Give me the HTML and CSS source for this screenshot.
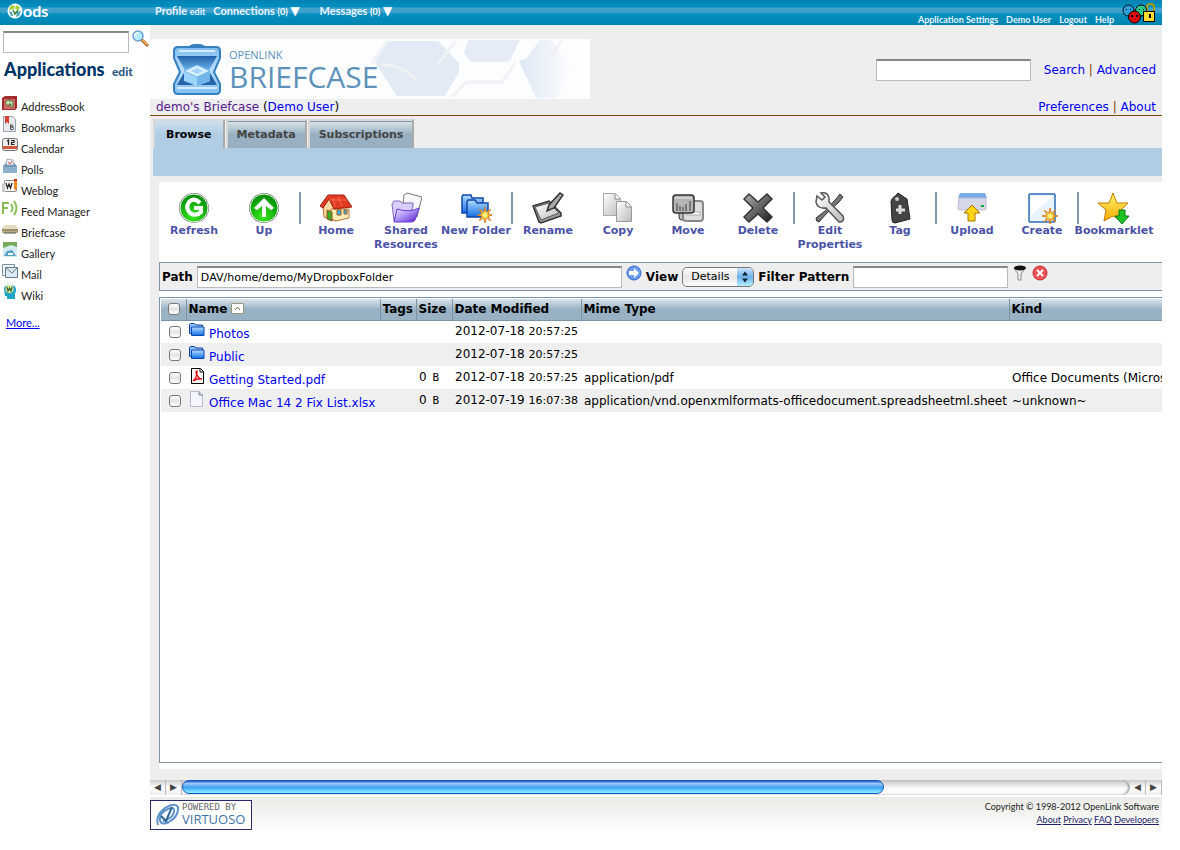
FILE: index.html
```html
<!DOCTYPE html>
<html lang="en">
<head>
    <meta charset="UTF-8" />
    <meta name="viewport" content="width=device-width, initial-scale=1.0" />
    <title>ODS Briefcase</title>
    <link rel="stylesheet" href="styles.css">
</head>
<body>

<!-- shared gradients and symbols -->
<svg class="defs" width="0" height="0" aria-hidden="true">
    <defs>
        <radialGradient id="green" cx="45%" cy="80%" r="75%"><stop offset="0" stop-color="#35e81c"/><stop offset="1" stop-color="#078c0b"/></radialGradient>
        <linearGradient id="blue" x1="0" y1="0" x2="0" y2="1"><stop offset="0" stop-color="#b4dcff"/><stop offset="1" stop-color="#0f6fe6"/></linearGradient>
        <linearGradient id="violet" x1="0" y1="0" x2="1" y2="1"><stop offset="0" stop-color="#f2ecff"/><stop offset=".5" stop-color="#a98cf5"/><stop offset="1" stop-color="#5215c8"/></linearGradient>
        <linearGradient id="gray" x1="0" y1="0" x2="1" y2="1"><stop offset="0" stop-color="#fff"/><stop offset="1" stop-color="#bbb"/></linearGradient>
        <linearGradient id="dark" x1="0" y1="0" x2="1" y2="1"><stop offset="0" stop-color="#b0b0b0"/><stop offset="1" stop-color="#1c1c1c"/></linearGradient>
        <linearGradient id="gold" x1="0" y1="0" x2="0" y2="1"><stop offset="0" stop-color="#fff36b"/><stop offset="1" stop-color="#f8a900"/></linearGradient>
        <linearGradient id="case" x1="0" y1="0" x2="0" y2="1"><stop offset="0" stop-color="#7fbcf0"/><stop offset=".5" stop-color="#b9dffb"/><stop offset="1" stop-color="#82bdf0"/></linearGradient>
        <linearGradient id="inner" x1="0" y1="0" x2="0" y2="1"><stop offset="0" stop-color="#1f62ac"/><stop offset="1" stop-color="#6db1ea"/></linearGradient>
        <linearGradient id="fade"><stop offset="0" stop-color="#dde7f4"/><stop offset="1" stop-color="#fcfdfe"/></linearGradient>
    </defs>
    <symbol id="spark" viewBox="0 0 14 14">
        <path d="M7 0l1 4.500L12 2 9.500 6 14 7 9.500 8 12 12 8 9.500 7 14 6 9.500 2 12 4.500 8 0 7l4.500-1L2 2l4 2.500z" fill="#ffdc4c" stroke="#d2761a" stroke-width=".8"/>
        <circle cx="7" cy="7" r="2" fill="#fff27a"/>
    </symbol>
    <symbol id="folder" viewBox="0 0 16 16">
        <path d="M.5 11.500v-9l1-1h4l1.500 1.500h6.500v9z" fill="#8cc4f8" stroke="#0c3f9c"/>
        <path d="M2.500 13.500V5h12.500v8.500z" fill="url(#blue)" stroke="#0a47b0"/>
    </symbol>
</svg>

<header class="topbar">
    <a class="ods" href="#">
        <svg width="16" height="16" viewBox="0 0 16 16"><circle cx="8" cy="8" r="7.500" fill="#fff"/><path d="M4 2l4 1-1 3-5 1zM9 2l4 2-1 3-4-1z" fill="#a5cf38"/><path d="M2 8l3 1 1 4-2 0zM10 9l4-1-2 5-3 1z" fill="#4ca9b9"/><path d="M6 7l2 4 3-4" fill="none" stroke="#3d7d31" stroke-width="1.500"/></svg>
        <span>ods</span>
    </a>
    <nav class="topnav">
        <span><a href="#">Profile</a> <a class="small" href="#">edit</a></span>
        <span><a href="#">Connections</a> <span class="small">(0)</span> <b>▼</b></span>
        <span><a href="#">Messages</a> <span class="small">(0)</span> <b>▼</b></span>
    </nav>
    <nav class="usernav">
        <a href="#">Application Settings</a>
        <a href="#">Demo User</a>
        <a href="#">Logout</a>
        <a href="#">Help</a>
    </nav>
    <svg class="faces" width="34" height="22" viewBox="0 0 34 22">
        <g stroke="#000">
            <path d="M25 9V4q0-3 3.500-3T32 4v5" fill="none" stroke="#a89a10" stroke-width="2"/>
            <circle cx="6.500" cy="7.500" r="5.500" fill="#2a9fdc"/>
            <circle cx="19" cy="7.500" r="5.500" fill="#2cc88c"/>
            <rect x="21.500" y="8.500" width="11" height="10" fill="#ffd92e"/>
            <circle cx="12.500" cy="14" r="6" fill="#dd0c0c"/>
        </g>
        <path d="M4 6h1v1H4zM8 6h1v1H8zM17 6h1v1h-1zM21 6h1v1h-1zM9 12h2v2H9zM14 12h2v2h-2zM27 11h2v4h-2z"/>
    </svg>
</header>

<div class="columns">
    <aside class="sidebar">
        <form class="find">
            <input type="text" aria-label="Find">
            <button type="button" aria-label="Find">
                <svg width="17" height="17" viewBox="0 0 17 17"><path d="M10 10l5 5" stroke="#8a4b13" stroke-width="3" stroke-linecap="round"/><path d="M10.500 10l4.500 4.500" stroke="#f1a94c" stroke-width="2" stroke-linecap="round"/><circle cx="6" cy="6" r="5" fill="#b9ecfb" stroke="#6c9ed0" stroke-width="1.500"/><path d="M3 6q0-3 3-3" stroke="#fff" stroke-width="1.500" fill="none"/></svg>
            </button>
        </form>
        <h2>Applications <a href="#">edit</a></h2>
        <ul>
            <li><svg width="16" height="16" viewBox="0 0 16 16"><path d="M0 3l3-2h12v12l-2 2H0z" fill="#a32b2b"/><path d="M2 4h11v10H2z" fill="#c96b66"/><path d="M3 8l4-4v2h4v6H9V9H7v2z" fill="#b9e2a4" stroke="#426c35" stroke-width=".7"/></svg><a href="#">AddressBook</a></li>
            <li><svg width="16" height="16" viewBox="0 0 16 16"><path d="M1.500.500h9l3 3v12h-12z" fill="#e6eaee" stroke="#9aa3ad"/><path d="M3 0h4v8L5 6 3 8z" fill="#d5412f"/><path d="M8.500 8.500v5M8.500 9h2q1 1 0 2h-2h2.500q1 1 0 2.500h-2.500" fill="none" stroke="#555"/></svg><a href="#">Bookmarks</a></li>
            <li><svg width="16" height="16" viewBox="0 0 16 16"><rect x=".5" y="1.500" width="15" height="12" rx="2" fill="#eee" stroke="#777"/><path d="M1 9h14v3H1z" fill="#d4573f"/><path d="M5 4l1.500-1v5M9 3.500h3v2H9.500v2h3" fill="none" stroke="#222" stroke-width="1.200"/></svg><a href="#">Calendar</a></li>
            <li><svg width="16" height="16" viewBox="0 0 16 16"><path d="M1 8l3-3h8l3 3v7H1z" fill="#7195b4"/><path d="M1 9h14v6H1z" fill="#8db1cc"/><path d="M4 7l1-6 6 1 1 5z" fill="#f3f6fa" stroke="#8499ae" stroke-width=".8"/><path d="M6 4l2 2 2-3" fill="none" stroke="#ca3939"/></svg><a href="#">Polls</a></li>
            <li><svg width="16" height="16" viewBox="0 0 16 16"><rect x="2.500" y="1.500" width="12" height="11" rx="1" fill="#fff" stroke="#888"/><path d="M0 5l3-1v9H0" fill="#ccc"/><path d="M4 4l1.500 5L7 5l1.500 4L10 4" fill="none" stroke="#222" stroke-width="1.300"/><path d="M12 0h3v9l-2 3-1-3z" fill="#f18921"/><path d="M12 0h3v2h-3z" fill="#c73121"/></svg><a href="#">Weblog</a></li>
            <li><svg width="16" height="16" viewBox="0 0 16 16"><path d="M1 14V3h6M1 8h5M9 4q3 4 0 8M12 1q5 7 0 14" fill="none" stroke="#89bf55" stroke-width="2"/></svg><a href="#">Feed Manager</a></li>
            <li><svg width="16" height="16" viewBox="0 0 16 16"><path d="M0 8l3-4h10l3 4v4H0z" fill="#b9ad85"/><path d="M3 4h10l3 4H0z" fill="#e4dec1"/><path d="M0 9h16" stroke="#7e7352"/><path d="M2 12h12" stroke="#555"/></svg><a href="#">Briefcase</a></li>
            <li><svg width="16" height="16" viewBox="0 0 16 16"><path d="M1 0h14v15H1z" fill="#d7ebf2"/><path d="M1 0h14v5L9 3 1 6z" fill="#75a95b"/><path d="M2 14l3-5 5-1 4 6z" fill="#54a1c6"/><path d="M6 11h5v2H6z" fill="#fff"/></svg><a href="#">Gallery</a></li>
            <li><svg width="16" height="16" viewBox="0 0 16 16"><path d="M.5 1.500h12v11H.5z" fill="#f0f3f5" stroke="#7d92a0"/><path d="M3.500 4.500h12v10h-12z" fill="#dbe8f1" stroke="#5f7e92"/><path d="M4 5l6 5 5-5" fill="none" stroke="#5f7e92"/></svg><a href="#">Mail</a></li>
            <li><svg width="16" height="16" viewBox="0 0 16 16"><path d="M2 5q0-4 6-4 7 0 6 6l-1 3v5H5v-3H3z" fill="#20a5ca"/><circle cx="7.500" cy="5" r="4" fill="#e1e996"/><path d="M5 3l1 4 1.500-3L9 7l1-4" fill="none" stroke="#376236" stroke-width="1.200"/></svg><a href="#">Wiki</a></li>
        </ul>
        <a class="more" href="#">More...</a>
    </aside>

    <main>
        <div class="banner">
            <div class="brand">
                <svg width="50" height="51" viewBox="0 0 50 51">
                    <path d="M17 4q8-6 16 0" fill="none" stroke="#3b80bd" stroke-width="3"/>
                    <path d="M6 3h38q4 0 4 4v7l-6 14 6 12v6q0 4-4 4H6q-4 0-4-4v-6l6-12L2 14V7q0-4 4-4z" fill="url(#case)" stroke="#3480c1" stroke-width="2"/>
                    <path d="M5 12h40l-8 14H13z" fill="url(#inner)"/>
                    <path d="M13 27h24l8 14H5z" fill="#2864a8"/>
                    <path d="M12 27l13-6 13 6v10l-13 5-13-5z" fill="#9dd4fa"/>
                    <path d="M12 27l13-6 13 6-13 6z" fill="#d9f0ff" stroke="#75b7e8"/>
                    <path d="M25 33v9l13-5V27z" fill="#72b5ea"/>
                    <path d="M19 27l6-3 6 3-6 3z" fill="#a4d5f8"/>
                    <path d="M5 44h40M7 7h36" stroke="#d5ecff" stroke-width="2"/>
                </svg>
                <div class="brand-text"><span>OPENLINK</span><strong>BRIEFCASE</strong></div>
                <svg class="hexes" width="220" height="60" viewBox="0 0 220 60">
                    <path d="M5 24Q14 3 20 2h48l21 22v9L75 57H27z" fill="#e2eaf5"/>
                    <path d="M94 14l4-13h52l-10 20q-2 2-5 2h-32q-3 0-5-3z" fill="#e5ecf6"/>
                    <path d="M149 22l7-2 14-19h12l20 30-16 28h-20z" fill="url(#fade)"/>
                    <g fill="none" stroke="#f0f2f5" stroke-width="3">
                        <path d="M2 24L17 2M12 26q20 0 34 14M68 24L86 2M96 43h36l14-20M96 43L82 58M176 22L192 2"/>
                    </g>
                </svg>
            </div>
            <div class="quick">
                <input type="text" aria-label="Search">
                <a href="#">Search</a> <i>|</i> <a href="#">Advanced</a>
            </div>
        </div>
        <div class="crumbs">
            <span><a class="visited" href="#">demo's Briefcase</a> (<a href="#">Demo User</a>)</span>
            <span><a href="#">Preferences</a> <i>|</i> <a href="#">About</a></span>
        </div>

        <div class="tabs">
            <button type="button" class="active">Browse</button>
            <button type="button">Metadata</button>
            <button type="button">Subscriptions</button>
        </div>
        <div class="strip"></div>

        <section class="panel">
            <div class="toolbar">
                <button type="button"><svg width="32" height="32" viewBox="0 0 32 32"><circle cx="16" cy="16" r="15" fill="#777"/><circle cx="16" cy="16" r="14" fill="url(#green)" stroke="#e8ffe8"/><path d="M22 11q-6-6-11-1-4 6 1 11 6 4 11-1v-4h-7" fill="none" stroke="#fff" stroke-width="4"/></svg>Refresh</button>
                <button type="button"><svg width="32" height="32" viewBox="0 0 32 32"><circle cx="16" cy="16" r="15" fill="#777"/><circle cx="16" cy="16" r="14" fill="url(#green)" stroke="#e8ffe8"/><path d="M16 6l10 10-3 2-5-4v11h-4V14l-5 4-3-2z" fill="#fff"/></svg>Up</button>
                <hr>
                <button type="button"><svg width="32" height="32" viewBox="0 0 32 32"><path d="M3 14l7-8 6 11v12L4 25z" fill="#ffd9a0" stroke="#b06b30"/><path d="M11 17h18v9l-13 3-5-2z" fill="#ffedb9" stroke="#b5763a"/><path d="M0 14L8 3h16l8 12-18 2-5-10-6 9z" fill="#e53a22" stroke="#9a1f10"/><path d="M13 6l2 9M18 5l4 9M9 8h18" stroke="#f77a5a" stroke-width=".8"/><path d="M7 18l5 2v9l-5-2z" fill="#3daa26" stroke="#9a5020"/><path d="M17 18h4v5h-4zM24 18h3v4h-3z" fill="#3bb2ee" stroke="#9a5b20"/></svg>Home</button>
                <button type="button"><svg width="32" height="32" viewBox="0 0 32 32"><path d="M14 3l3-2 15 4-5 20-15-4z" fill="#f7f7fb" stroke="#777"/><path d="M2 12l2-3h6l2 2h11v3l-4 15H4z" fill="#d8cdfb" stroke="#7c69bd"/><path d="M7 17q12 4 22-1l-4 12q-1 2-4 2H4z" fill="url(#violet)" stroke="#6b3ad0"/></svg>Shared Resources</button>
                <button type="button"><svg width="32" height="32" viewBox="0 0 32 32"><path d="M2 21V5l1-2h8l1 3h11v15z" fill="url(#blue)" stroke="#1246ab" stroke-width="1.500"/><path d="M7 25V10l1-2h7l2 3h11v14z" fill="url(#blue)" stroke="#1246ab" stroke-width="1.500"/><use href="#spark" x="17" y="15" width="16" height="16"/></svg>New Folder</button>
                <hr>
                <button type="button"><svg width="32" height="32" viewBox="0 0 32 32"><path d="M1 14l16-5 12 12v3L9 31 7 30z" fill="#999" stroke="#333" stroke-width="1.500"/><path d="M3 15l14-4 10 10-18 7z" fill="url(#gray)" stroke="#555"/><path d="M15 19l2-6L28 1l3 2-9 13z" fill="#aaa" stroke="#333" stroke-width="1.500"/></svg>Rename</button>
                <button type="button"><svg width="32" height="32" viewBox="0 0 32 32"><path d="M1.500 1.500h12l5 5v17h-17z" fill="url(#gray)" stroke="#aaa"/><path d="M13 2v5h5" fill="#fff" stroke="#888"/><path d="M14.500 9.500h10l5 5v15h-15z" fill="url(#gray)" stroke="#999"/><path d="M24 10v5h5" fill="#fff" stroke="#888"/></svg>Copy</button>
                <button type="button"><svg width="32" height="32" viewBox="0 0 32 32"><rect x="7" y="10" width="19" height="18" rx="3" fill="#bbb" stroke="#333"/><rect x="11" y="9" width="20" height="20" rx="3" fill="#ddd" stroke="#888" stroke-width="2"/><path d="M14 20h14v3H14z" fill="#fff" stroke="#aaa"/><rect x="1" y="3" width="21" height="18" rx="3" fill="#b5b5b5" stroke="#333" stroke-width="1.500"/><path d="M5 19v-8M8 19v-5M11 19v-4M14 19v-7M18 19V9" stroke="#777" stroke-width="2"/><path d="M3 6h17" stroke="#eee"/></svg>Move</button>
                <button type="button"><svg width="32" height="32" viewBox="0 0 32 32"><path d="M2 7l5-5 9 8 9-8 5 5-9 9 9 9-5 5-9-8-9 8-5-5 9-9z" fill="url(#dark)" stroke="#333" stroke-width="1.500" stroke-linejoin="round"/></svg>Delete</button>
                <hr>
                <button type="button"><svg width="32" height="32" viewBox="0 0 32 32"><path d="M26 2l3 3-4 5-12 11-8 9q-3 0-3-4l9-7L22 7z" fill="#777" stroke="#333"/><path d="M3 4l5 4 3-3-4-4q7-1 8 5v4l14 14q2 6-4 6L12 16q-9 1-10-6z" fill="url(#gray)" stroke="#555" stroke-width="1.500"/></svg>Edit Properties</button>
                <button type="button"><svg width="32" height="32" viewBox="0 0 32 32"><path d="M7 8q4-8 13-1" fill="none" stroke="#666"/><path d="M7 9l7-8 9 6 3 20-15 4q-3 0-3-3z" fill="#444" stroke="#222"/><circle cx="13" cy="7" r="2" fill="#ccc"/><path d="M16 13v9M12 18h9" stroke="#ddd" stroke-width="3"/></svg>Tag</button>
                <hr>
                <button type="button"><svg width="32" height="32" viewBox="0 0 32 32"><path d="M4 1h25l2 5H2z" fill="#78a9e8"/><path d="M3 6h27v10q0 2-2 2H4q-2 0-2-2z" fill="#d6d8e8" stroke="#b7bbd2"/><path d="M25 14h3" stroke="#0a3" stroke-width="2"/><path d="M16 13l8 8h-5v8h-7v-8H8z" fill="#ffd417" stroke="#a67600"/></svg>Upload</button>
                <button type="button"><svg width="32" height="32" viewBox="0 0 32 32"><rect x="3" y="2" width="26" height="28" rx="1" fill="#eaf4ff" stroke="#2c6cb8" stroke-width="1.500"/><path d="M5 4h22L5 23z" fill="#fff"/><use href="#spark" x="16" y="16" width="16" height="16"/></svg>Create</button>
                <hr>
                <button type="button"><svg width="32" height="32" viewBox="0 0 32 32"><path d="M15 1l4 10h11l-8 8 3 11-10-6-9 5 2-11-8-7h11z" fill="url(#gold)" stroke="#c77a00"/><path d="M21 18h6v6h4l-7 8-7-8h4z" fill="#1fc325" stroke="#087610"/></svg>Bookmarklet</button>
            </div>

            <form class="pathbar">
                <label for="path">Path</label>
                <input id="path" class="path" type="text" value="DAV/home/demo/MyDropboxFolder">
                <button type="button" aria-label="Go"><svg width="16" height="16" viewBox="0 0 16 16"><circle cx="8" cy="8" r="7" fill="#6b9df0" stroke="#3563cb"/><path d="M3 6h5V3l5 5-5 5v-3H3z" fill="#fff"/></svg></button>
                <label for="view">View</label>
                <span class="select">
                    <select id="view"><option>Details</option><option>List</option></select>
                    <svg width="16" height="18" viewBox="0 0 16 18"><path d="M8 3.500l3 4H5zM8 14.500l3-4H5z" fill="#123"/></svg>
                </span>
                <label for="filter">Filter Pattern</label>
                <input id="filter" class="filter" type="text">
                <button type="button" aria-label="Filter"><svg width="16" height="16" viewBox="0 0 16 16"><path d="M2 3l4 6v6h3V9l4-6z" fill="#eee" stroke="#888"/><ellipse cx="8" cy="3" rx="6" ry="2.500" fill="#111"/></svg></button>
                <button type="button" aria-label="Clear"><svg width="16" height="16" viewBox="0 0 16 16"><circle cx="8" cy="8" r="7" fill="#ee5257" stroke="#c72a32"/><path d="M5 5l6 6M11 5l-6 6" stroke="#fff" stroke-width="2"/></svg></button>
            </form>

            <div class="listing">
                <table>
                    <colgroup>
                        <col class="c-check"><col class="c-name"><col class="c-tags"><col class="c-size"><col class="c-date"><col class="c-mime"><col class="c-kind">
                    </colgroup>
                    <thead>
                        <tr>
                            <th><input type="checkbox" aria-label="Select all"></th>
                            <th>Name <svg width="13" height="11" viewBox="0 0 13 11"><path d="M.5.500h12v10H.5z" fill="#fff" stroke="#99957a"/><path d="M4 7l2.500-3L9 7" fill="none" stroke="#77704a"/></svg></th>
                            <th>Tags</th>
                            <th>Size</th>
                            <th>Date Modified</th>
                            <th>Mime Type</th>
                            <th>Kind</th>
                        </tr>
                    </thead>
                    <tbody>
                        <tr>
                            <td><input type="checkbox" aria-label="Photos"></td>
                            <td><span class="file"><svg width="16" height="16"><use href="#folder"/></svg><a href="#">Photos</a></span></td>
                            <td></td>
                            <td></td>
                            <td>2012-07-18 <small>20:57:25</small></td>
                            <td></td>
                            <td></td>
                        </tr>
                        <tr>
                            <td><input type="checkbox" aria-label="Public"></td>
                            <td><span class="file"><svg width="16" height="16"><use href="#folder"/></svg><a href="#">Public</a></span></td>
                            <td></td>
                            <td></td>
                            <td>2012-07-18 <small>20:57:25</small></td>
                            <td></td>
                            <td></td>
                        </tr>
                        <tr>
                            <td><input type="checkbox" aria-label="Getting Started.pdf"></td>
                            <td><span class="file"><svg width="16" height="16" viewBox="0 0 16 16"><path d="M2.500.500h9l3 3v12h-12z" fill="#fff" stroke="#000"/><path d="M11 1v3h3" fill="none" stroke="#000"/><path d="M4 13q4-3 4-10-2 0 0 4 2 4 5 4-4-1-9 2z" fill="none" stroke="#e00" stroke-width="1.300"/></svg><a href="#">Getting Started.pdf</a></span></td>
                            <td></td>
                            <td>0 <small class="unit">B</small></td>
                            <td>2012-07-18 <small>20:57:25</small></td>
                            <td>application/pdf</td>
                            <td>Office Documents (Microsoft Office)</td>
                        </tr>
                        <tr>
                            <td><input type="checkbox" aria-label="Office Mac 14 2 Fix List.xlsx"></td>
                            <td><span class="file"><svg width="16" height="16" viewBox="0 0 16 16"><path d="M1.500.500h9l3 3v12h-12z" fill="#f4f6fb" stroke="#b4bccb"/><path d="M10 1v3h4" fill="#cfd6e4" stroke="#7c8699"/></svg><a href="#">Office Mac 14 2 Fix List.xlsx</a></span></td>
                            <td></td>
                            <td>0 <small class="unit">B</small></td>
                            <td>2012-07-19 <small>16:07:38</small></td>
                            <td>application/vnd.openxmlformats-officedocument.spreadsheetml.sheet</td>
                            <td>~unknown~</td>
                        </tr>
                    </tbody>
                </table>
            </div>
        </section>

        <div class="scrollbar">
            <button type="button" aria-label="Scroll left">◀</button>
            <button type="button" aria-label="Scroll right">▶</button>
            <div class="track"><div class="thumb"></div></div>
            <button type="button" aria-label="Scroll left">◀</button>
            <button type="button" aria-label="Scroll right">▶</button>
        </div>

        <footer>
            <a class="virtuoso" href="#">
                <svg width="24" height="24" viewBox="0 0 24 24"><path d="M2 22Q-1 12 9 5 19-1 22 4q1 9-9 15-8 4-9-2Q3 10 12 6q7-3 6 3-2 7-11 9" fill="none" stroke="#5e92c8" stroke-width="2"/><path d="M5 13l5 5 6-14" fill="none" stroke="#35679f" stroke-width="2"/></svg>
                <span class="virtuoso-text"><span>POWERED BY</span><strong>VIRTUOSO</strong></span>
            </a>
            <div class="legal">
                <p>Copyright © 1998-2012 OpenLink Software</p>
                <p><a href="#">About</a> <a href="#">Privacy</a> <a href="#">FAQ</a> <a href="#">Developers</a></p>
            </div>
        </footer>
    </main>
</div>

</body>
</html>
```
FILE: styles.css
```css
* {
    box-sizing: border-box;
}
body {
    display: flex;
    flex-direction: column;
    min-height: 100vh;
    margin: 0;
    padding: 0 18px 20px 0;
    background: #fff;
    font-family: "DejaVu Sans", Verdana, sans-serif;
    font-size: 12px;
    line-height: 16px;
}
a {
    color: #0000ee;
    text-decoration: none;
}
button {
    padding: 0;
    border: 0;
    background: none;
    font: inherit;
}
svg {
    display: block;
    flex: none;
}
.defs {
    position: absolute;
}
input[type="text"] {
    height: 22px;
    padding: 0 3px;
    border: 1px solid #bbb;
    border-top: 2px solid #888;
    border-radius: 0;
    background: #fff;
    font: 11px "DejaVu Sans", sans-serif;
}
input[type="checkbox"] {
    display: block;
    width: 12px;
    height: 12px;
    margin: 0 auto;
    appearance: none;
    border: 1px solid #777;
    border-radius: 3px;
    background: linear-gradient(#fff, #e4e4e4 50%, #fff);
}

/* top bar */
.topbar {
    display: flex;
    height: 25px;
    padding-right: 6px;
    background: linear-gradient(#0083b4, #0090c0 28%, #43a4cd 32%, #3a9fca 50%, #0090c0 56%, #0084b0);
    color: #fff;
    font-family: Lato, sans-serif;
    font-size: 11px;
}
.topbar a {
    color: #e8f4ff;
}
.ods {
    display: flex;
    width: 155px;
    padding: 3px 0 0 7px;
}
.topbar .ods {
    color: #fff;
}
.ods span {
    font-size: 16px;
    font-weight: bold;
}
.topnav {
    display: flex;
    flex: 1;
    gap: 8px;
    padding-top: 3px;
    font-weight: bold;
}
.topnav > span + span + span {
    margin-left: 12px;
}
.topnav .small {
    font-size: 9px;
}
.topnav b {
    font-family: "DejaVu Sans", sans-serif;
    font-size: 12px;
}
.usernav {
    display: flex;
    gap: 8px;
    padding-top: 12px;
    font-size: 9px;
    font-weight: bold;
}
.faces {
    margin: 3px 0 0 8px;
}

.columns {
    display: flex;
    flex: 1;
}

/* sidebar */
.sidebar {
    flex: none;
    width: 150px;
    color: #222;
    font-family: Lato, sans-serif;
    font-size: 11px;
}
.find {
    display: flex;
    gap: 3px;
    padding: 5px 0 0 3px;
}
.find input {
    width: 126px;
    margin-top: 1px;
}
.find button {
    align-self: flex-start;
}
.sidebar h2 {
    margin: 6px 0 13px 4px;
    color: #003366;
    font-size: 18px;
    font-weight: 900;
    line-height: 20px;
}
.sidebar h2 a {
    margin-left: 3px;
    color: #2c5c85;
    font-size: 12px;
}
.sidebar ul {
    margin: 0;
    padding: 0 0 0 2px;
    list-style: none;
}
.sidebar li {
    display: flex;
    gap: 3px;
    height: 21px;
}
.sidebar li a {
    padding-top: 4px;
    color: #222;
}
.sidebar .more {
    display: block;
    margin: 10px 0 0 6px;
    text-decoration: underline;
}

/* main column */
main {
    display: flex;
    flex: 1;
    flex-direction: column;
    min-width: 0;
    background: #eee;
}
.banner {
    display: flex;
    justify-content: space-between;
    padding-top: 14px;
}
.brand {
    display: flex;
    align-items: center;
    width: 440px;
    height: 60px;
    padding-left: 22px;
    background: #fcfdfe;
}
.brand-text {
    width: 141px;
    margin-left: 7px;
    padding-top: 4px;
    color: #5d92ba;
    font-family: "Open Sans", sans-serif;
    white-space: nowrap;
}
.brand-text span {
    display: block;
    font-size: 11px;
    line-height: 12px;
}
.brand-text strong {
    display: block;
    font-size: 30px;
    font-weight: 400;
    line-height: 32px;
}
.quick {
    padding: 20px 6px 0 0;
    white-space: nowrap;
}
.quick input {
    width: 155px;
    margin-right: 9px;
    vertical-align: middle;
}
i {
    color: #8a4000;
    font-style: normal;
}
.crumbs {
    display: flex;
    justify-content: space-between;
    padding: 0 6px;
    border-bottom: 1px solid #824a08;
}
.visited {
    color: #551a8b;
}
.tabs {
    display: flex;
    gap: 1px;
    padding: 3px 0 0 3px;
}
.tabs button {
    height: 29px;
    padding: 0 9px;
    border: 2px solid #d8d8d8;
    border-right-color: #aaa;
    border-bottom: 0;
    background: linear-gradient(#dce6ec, #98b0c1 50%);
    box-shadow: inset 0 1px #8296a6;
    color: #444;
    font-size: 11px;
    font-weight: bold;
}
.tabs .active {
    padding: 0 11px;
    background: linear-gradient(#cfe0ee, #b0cde4 50%);
    box-shadow: none;
    color: #000;
}
.strip {
    height: 28px;
    margin-left: 3px;
    background: #b0cde4;
}
.panel {
    display: flex;
    flex: 1;
    flex-direction: column;
    margin: 6px 0 11px 9px;
    padding-bottom: 6px;
    background: #fff;
}

/* toolbar */
.toolbar {
    display: flex;
    height: 80px;
    padding-top: 10px;
}
.toolbar button {
    display: flex;
    flex: none;
    flex-direction: column;
    align-items: center;
    align-self: flex-start;
    width: 70px;
    color: #4b53a6;
    font-size: 11px;
    font-weight: bold;
    line-height: 14px;
}
.toolbar hr {
    flex: none;
    width: 2px;
    height: 32px;
    margin: 0;
    border: 0;
    background: #7f99ad;
}

/* path bar */
.pathbar {
    display: flex;
    align-items: center;
    gap: 4px;
    height: 29px;
    padding-left: 2px;
    border: 1px solid #7d94a9;
    border-right: 0;
    background: #eee;
    font-weight: bold;
}
.pathbar button {
    align-self: flex-start;
    margin-top: 2px;
}
.path {
    flex: 0 1 425px;
    min-width: 0;
}
.filter {
    width: 155px;
}
.select {
    display: flex;
    position: relative;
}
.select select {
    width: 72px;
    height: 20px;
    padding: 0 0 0 8px;
    appearance: none;
    border: 1px solid #777;
    border-radius: 5px;
    background: linear-gradient(#fff, #e5e5e5 50%, #fff);
    color: #000;
    font: 11px "DejaVu Sans", sans-serif;
}
.select svg {
    position: absolute;
    top: 1px;
    right: 1px;
    border-radius: 0 4px 4px 0;
    background: linear-gradient(#cbe4fb, #6fb2ee 50%, #b2ecff);
    pointer-events: none;
}

/* file list */
.listing {
    flex: 1;
    margin-top: 6px;
    padding: 1px;
    overflow: hidden;
    border: 1px solid #7d94a9;
    border-right: 0;
}
.listing table {
    width: 1130px;
    border-collapse: collapse;
    table-layout: fixed;
}
.c-check {
    width: 25px;
}
.c-name {
    width: 194px;
}
.c-tags {
    width: 36px;
}
.c-size {
    width: 36px;
}
.c-date {
    width: 129px;
}
.c-mime {
    width: 428px;
}
.listing th {
    height: 21px;
    padding: 0 0 0 2px;
    border-right: 1px solid #7a93a6;
    border-bottom: 1px solid #7a93a6;
    background: linear-gradient(#dbe4eb, #98b1c3 50%);
    text-align: left;
    white-space: nowrap;
}
.listing th svg {
    display: inline-block;
    vertical-align: -1px;
}
.listing td {
    height: 23px;
    padding: 0 0 0 3px;
    white-space: nowrap;
}
.listing tbody tr:nth-child(even) {
    background: #efefef;
}
.file {
    display: flex;
    gap: 4px;
}
.file a {
    padding-top: 4px;
}
.listing small {
    font-size: 11px;
}
.listing .unit {
    margin-left: 2px;
    font-family: "DejaVu Sans Mono", monospace;
}

/* bottom scrollbar */
.scrollbar {
    display: flex;
    height: 15px;
    background: linear-gradient(#ccc, #fff 50%, #eee);
}
.scrollbar button {
    width: 16px;
    border-right: 1px solid #bbb;
    color: #444;
    font-size: 9px;
    line-height: 15px;
}
.track {
    flex: 1;
    border-radius: 0 8px 8px 0;
    background: linear-gradient(#c5c5c5, #fff 60%, #f4f4f4);
    box-shadow: inset -2px 0 2px #aaa;
}
.thumb {
    width: 74%;
    height: 14px;
    border: 1px solid #1258c4;
    border-radius: 8px;
    background: linear-gradient(#1f55d0, #9cc9f5 20%, #4fa4f2 50%, #3da0f2 52%, #8ff0ff);
}

footer {
    display: flex;
    justify-content: space-between;
    padding-top: 3px;
    border-top: 2px solid #fff;
    background: linear-gradient(#ebece7, #fcfcfb);
}
.virtuoso {
    display: flex;
    align-items: center;
    gap: 2px;
    width: 102px;
    height: 30px;
    padding-left: 5px;
    border: 1px solid #2a2a6a;
    background: #fff;
    color: #4373a8;
}
.virtuoso-text span {
    display: block;
    color: #666;
    font: 9px/9px "DejaVu Sans Mono", monospace;
}
.virtuoso-text strong {
    display: block;
    font: 13px/15px "Open Sans", sans-serif;
}
.legal {
    padding-right: 3px;
    color: #222;
    font-family: Lato, sans-serif;
    font-size: 9px;
    line-height: 13px;
    text-align: right;
}
.legal p {
    margin: 0;
}
.legal a {
    color: #22226a;
    text-decoration: underline;
}
```
